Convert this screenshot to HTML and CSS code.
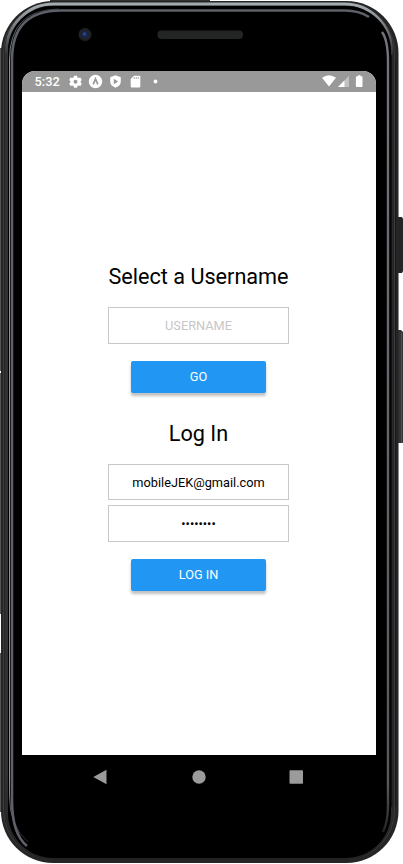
FILE: index.html
```html
<!DOCTYPE html>
<html lang="en">
<head>
<meta charset="utf-8">
<title>Log In</title>
<link rel="stylesheet" href="styles.css">
</head>
<body>
<div class="device">
  <svg class="shell" width="403" height="864" viewBox="0 0 403 864" aria-hidden="true">
    <defs>
      <linearGradient id="rim" x1="0" y1="0" x2="0" y2="1">
        <stop offset="0" stop-color="#a4acb0"/><stop offset=".02" stop-color="#85898d"/><stop offset=".06" stop-color="#303031"/><stop offset=".9" stop-color="#303030"/><stop offset="1" stop-color="#222"/>
      </linearGradient>
      <linearGradient id="edge" gradientUnits="userSpaceOnUse" x1="0" y1="8" x2="0" y2="845">
        <stop offset="0" stop-color="#30343a"/><stop offset=".06" stop-color="#8b9298"/><stop offset=".92" stop-color="#8b9298"/><stop offset="1" stop-color="#222"/>
      </linearGradient>
      <linearGradient id="inner" gradientUnits="userSpaceOnUse" x1="0" y1="32" x2="0" y2="832">
        <stop offset="0" stop-color="#74747c"/><stop offset=".94" stop-color="#58595f"/><stop offset="1" stop-color="#222"/>
      </linearGradient>
    </defs>
    <path d="M398 217h4l1 2v52l-1 2h-4z" fill="#242424"/>
    <path d="M398 330h3l2 2v111h-5z" fill="#333"/>
    <path d="M401.500 333v110" stroke="#505050"/>
    <path d="M0 48h4v323H0zM0 373h4v241H0zM0 653h4v159H0z" fill="#555"/>
    <path d="M50 0H210V4H50z" fill="#333"/>
    <rect x="1" y="1" width="397.500" height="862" rx="52" fill="#252525"/>
    <rect x="3.500" y="3.500" width="391" height="856" rx="49" fill="none" stroke="#3b3b3b"/>
    <rect x="6.500" y="4" width="385" height="854.500" rx="47" fill="none" stroke="url(#rim)" stroke-width="3"/>
    <rect x="8" y="6" width="383" height="852" rx="45" fill="#000"/>
    <path d="M28 842Q9.500 826 9.500 797V60Q9.500 9 59 9" fill="none" stroke="url(#edge)"/>
    <path d="M27 846Q12 834 12 800V60Q12 10.500 61 10.500H345Q359 10.500 369 17" fill="none" stroke="#5d6068" stroke-width="2.600"/>
    <path d="M382 32Q388 40 388 62V805Q388 822 383 832" fill="none" stroke="url(#inner)" stroke-width="2.400"/>
    <path d="M391.500 55V807" stroke="#111" stroke-width="1.500"/>
    <path d="M395.500 60V807" stroke="#191919"/>
    <circle cx="85" cy="34.500" r="6.500" fill="#202122"/>
    <circle cx="85" cy="34.500" r="3.800" fill="#17234f"/>
    <circle cx="84.500" cy="34" r="1.700" fill="#34447c"/>
    <rect x="157.500" y="30.500" width="85.500" height="8.500" rx="4" fill="#222524"/>
  </svg>
  <div class="display">
    <header class="status">
      <span class="time">5:32</span>
      <svg class="notices" width="92" height="21" viewBox="0 0 92 21" fill="#fff" aria-hidden="true">
        <path fill-rule="evenodd" d="M5 4.700h3l.5 1.700 1.200.6 1.700-.5 1.400 2.500-1.200 1.200v1l1.200 1.200-1.400 2.500-1.700-.5-1.200.6L8 16.700H5L4.500 15l-1.200-.6-1.700.5L.2 12.400l1.200-1.200v-1L.2 9l1.400-2.500 1.700.5 1.200-.6zM6.500 8.700a2 2 0 1 0 0 4 2 2 0 1 0 0-4z"/>
        <circle cx="26.500" cy="10.500" r="6.700"/>
        <path d="M24.200 13.300L26.500 8L28.800 13.300" fill="none" stroke="#999" stroke-width="1.700"/>
        <path d="M46.500 4.300l5.300 2v4.200q0 4.200-5.300 6.300-5.300-2.100-5.300-6.300V6.300z"/>
        <path d="M44.800 7.800l4.400 2.700-4.400 2.700z" fill="#999"/>
        <path d="M65 4.800h5.300q1 0 1 1V15.500q0 1-1 1h-7.600q-1 0-1-1V8z"/>
        <path d="M65.300 6v2M67.300 6v2M69.300 6v2" stroke="#999" stroke-width=".8"/>
        <circle cx="86.500" cy="10.500" r="1.900"/>
      </svg>
      <svg class="signals" width="42" height="21" viewBox="0 0 42 21" fill="#fff" aria-hidden="true">
        <path d="M0 6.800Q7 1.800 14 6.800L7 15.500z"/>
        <path d="M27 4.800V16H16z" fill="#c2c2c2"/><path d="M22.500 9.400V16H16z"/>
        <path d="M36 4.300h2.500v1h1.200q.8 0 .8.800v9.200q0 .8-.8.800h-5q-.8 0-.8-.8V6.100q0-.8.800-.8H36z"/>
      </svg>
    </header>
    <main class="content">
      <h1 class="heading">Select a Username</h1>
      <input class="field field-name" type="text" placeholder="USERNAME" aria-label="Username">
      <button class="button">GO</button>
      <h2 class="heading heading-login">Log In</h2>
      <input class="field field-email" type="text" value="mobileJEK@gmail.com" aria-label="Email">
      <div class="field field-password">••••••••</div>
      <button class="button">LOG IN</button>
    </main>
  </div>
  <nav class="navigation">
    <svg width="210" height="16" viewBox="0 0 210 16" fill="#9b9b9b" aria-hidden="true">
      <path d="M.3 8L13.500.7V15.300z"/><circle cx="106" cy="8" r="6.700"/><rect x="196.500" y="1.300" width="13.500" height="13.500" rx=".7"/>
    </svg>
  </nav>
</div>
</body>
</html>
```
FILE: styles.css
```css
* { box-sizing: border-box; }
body { margin: 0; background: #fff; font-family: Roboto, sans-serif; color: #000; }
.device { position: relative; width: 403px; height: 864px; padding: 71px 27px 0 22px; overflow: hidden; }
.shell { position: absolute; inset: 0; }
.display { position: relative; height: 684px; background: #fff; border-radius: 13px 13px 0 0; overflow: hidden; }
.status { display: flex; align-items: center; height: 21px; padding: 0 12px 0 12.5px; background: #999; color: #fff; }
.time { width: 34.5px; font-size: 12.8px; font-weight: 500; line-height: 21px; }
.signals { margin-left: auto; }
.content { display: flex; flex-direction: column; align-items: center; padding: 171px 1px 0 0; }
.heading { margin: 0 0 17px; font-size: 21.65px; font-weight: 400; line-height: 27px; white-space: nowrap; }
.heading-login { margin: 27px 0 17px; }
.field { display: block; width: 181px; height: 37px; margin: 0; padding: 0; border: 1px solid #c8c8c8; border-radius: 0; background: #fff; font: 12.75px/35px Roboto, sans-serif; color: #000; text-align: center; outline: 0; }
.field-email { height: 36px; margin-bottom: 5px; }
.field::placeholder { color: #c7c7c7; opacity: 1; }
.button { width: 135px; height: 32px; margin: 17px 0 0; padding: 0; border: 0; border-radius: 2px; background: #2196f3; box-shadow: 0 3px 3px rgba(0,0,0,.25); color: #fff; font: 400 12.75px/32px Roboto, sans-serif; }
.navigation { position: relative; display: flex; padding: 14px 0 0 71px; }
```
